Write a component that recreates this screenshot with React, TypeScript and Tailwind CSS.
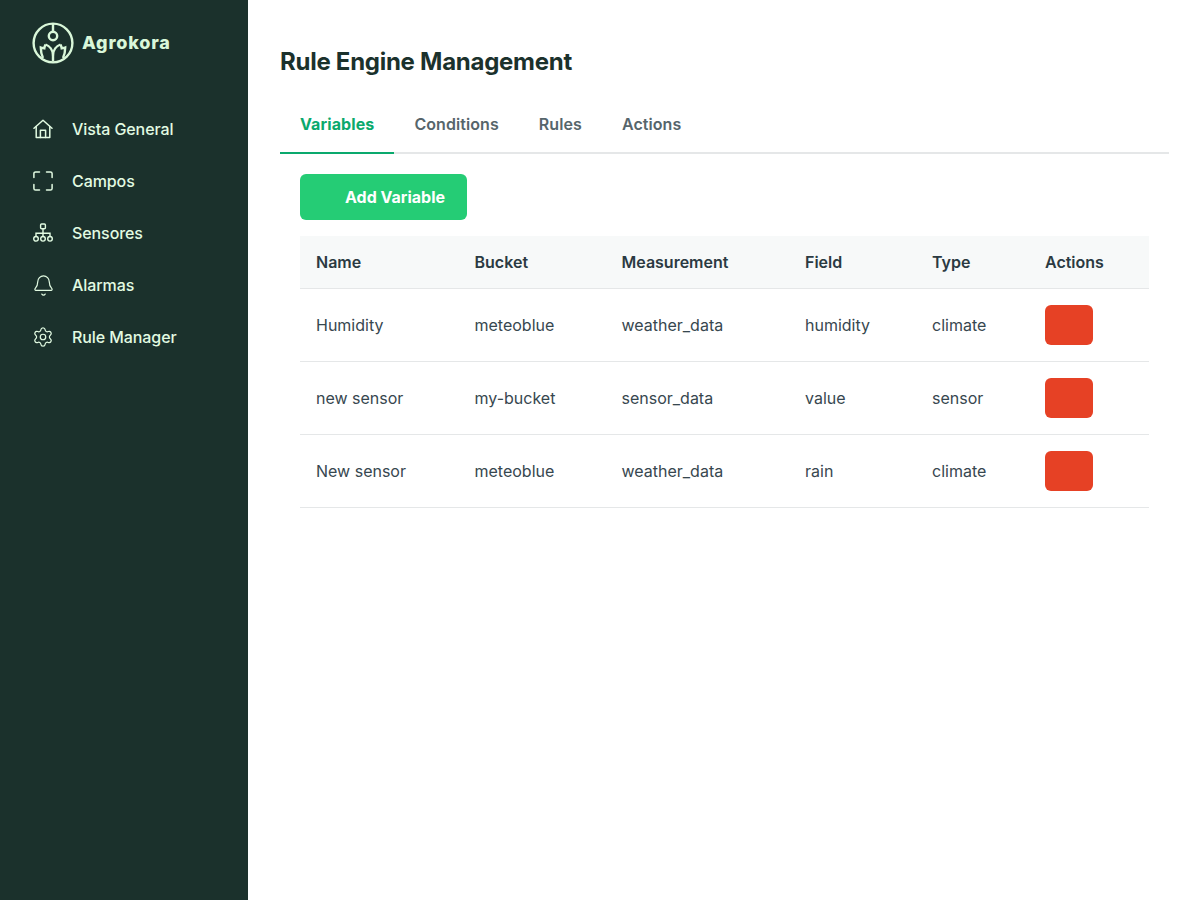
import { Bell, Settings } from "lucide-react";

const navItems = [
  { label: "Vista General", icon: HomeIcon },
  { label: "Campos", icon: FrameIcon },
  { label: "Sensores", icon: TreeIcon },
  { label: "Alarmas", icon: BellIcon },
  { label: "Rule Manager", icon: GearIcon },
];

const tabs = ["Variables", "Conditions", "Rules", "Actions"];

const variables = [
  { name: "Humidity", bucket: "meteoblue", measurement: "weather_data", field: "humidity", type: "climate" },
  { name: "new sensor", bucket: "my-bucket", measurement: "sensor_data", field: "value", type: "sensor" },
  { name: "New sensor", bucket: "meteoblue", measurement: "weather_data", field: "rain", type: "climate" },
];

function HomeIcon() {
  return (
    <svg width="20" height="20" viewBox="0 0 20 20" fill="none" stroke="currentColor" strokeWidth="1.5" strokeLinejoin="round" strokeLinecap="round">
      <path d="M1 9.2 10 1.2l9 8" />
      <path d="M3.2 7.6v11h13.6v-11" />
      <path d="M7.4 18.6v-7.4h5.2v7.4" />
    </svg>
  );
}

function FrameIcon() {
  return (
    <svg width="20" height="20" viewBox="0 0 20 20" fill="none" stroke="currentColor" strokeWidth="1.5" strokeLinecap="round">
      <path d="M6.5 .9H2.6A1.7 1.7 0 0 0 .9 2.6v3.9" />
      <path d="M13.5 .9h3.9a1.7 1.7 0 0 1 1.7 1.7v3.9" />
      <path d="M.9 13.5v3.9a1.7 1.7 0 0 0 1.7 1.7h3.9" />
      <path d="M19.1 13.5v3.9a1.7 1.7 0 0 1-1.7 1.7h-3.9" />
    </svg>
  );
}

function TreeIcon() {
  return (
    <svg width="20" height="20" viewBox="0 0 20 20" fill="none" stroke="currentColor" strokeWidth="1.4">
      <rect x="7.6" y="1" width="4.8" height="4.8" rx="1" />
      <path d="M10 5.8v7.4M3 13.2v-3h14v3" />
      <circle cx="3" cy="15.8" r="2.3" />
      <circle cx="10" cy="15.8" r="2.3" />
      <circle cx="17" cy="15.8" r="2.3" />
    </svg>
  );
}

function BellIcon() {
  return <Bell size={23} strokeWidth={1.25} className="shrink-0" />;
}

function GearIcon() {
  return <Settings size={22} strokeWidth={1.35} className="shrink-0" />;
}

function Logo() {
  return (
    <svg width="42" height="42" viewBox="0 0 42 42" fill="none" stroke="#d9f7d9" strokeWidth="2.4">
      <circle cx="21" cy="21" r="19.4" />
      <path d="M21 1.5v8" />
      <circle cx="21" cy="14" r="4.2" />
      <path d="M13.5 22.5C17.5 24 21 28 21 33.5v6" />
      <path d="M28.5 22.5C24.5 24 21 28 21 33.5" />
      <path d="M13.5 22.5C12.8 24 12.5 25 12.3 26.3 10.5 26 9.5 25.8 8.8 25.5 8.8 30 9.5 33 11 36" />
      <path d="M28.5 22.5C29.2 24 29.5 25 29.7 26.3 31.5 26 32.5 25.8 33.2 25.5 33.2 30 32.5 33 31 36" />
    </svg>
  );
}

export default function App() {
  return (
    <div className="flex min-h-[900px] w-full bg-white font-['Inter',sans-serif]">
      <aside className="w-[248px] shrink-0 bg-[#1b312c] text-[#e2fbe2]">
        <div className="flex h-[106px] items-start gap-[8px] pl-[32px] pt-[22px]">
          <Logo />
          <span className="mt-[9px] text-[18px] font-extrabold leading-[24px] tracking-[0.8px] text-[#d9f7d9]">Agrokora</span>
        </div>
        <nav className="flex flex-col gap-[12px] pt-[3px]">
          {navItems.map(({ label, icon: Icon }) => (
            <div key={label} className="flex h-[40px] items-center gap-[19px] pl-[33px] text-[16px] font-medium tracking-[-0.08px]">
              <span className="flex h-[20px] w-[20px] items-center justify-center">
                <Icon />
              </span>
              {label}
            </div>
          ))}
        </nav>
      </aside>

      <main className="min-w-0 flex-1 pl-[32px] pr-[10px] pt-[46px]">
        <h1 className="text-[24px] font-bold leading-[32px] tracking-[-0.27px] text-[#1b312c]">Rule Engine Management</h1>
        <div className="mt-[24px] flex border-b-2 border-[#e5e7e8]">
          {tabs.map((tab, i) => (
            <div
              key={tab}
              className={
                i === 0
                  ? "-mb-[2px] border-b-2 border-[#0aa96d] px-[20px] pb-[16px] pt-[10px] text-[16px] font-bold leading-[24px] tracking-[0.1px] text-[#0aa96d]"
                  : "px-[20px] pb-[16px] pt-[10px] text-[16px] font-semibold leading-[24px] tracking-[0.08px] text-[#56656b]"
              }
            >
              {tab}
            </div>
          ))}
        </div>

        <div className="px-[20px] pt-[20px]">
          <button className="h-[46px] w-[167px] rounded-[6px] bg-[#25cc75] pl-[45px] pr-[21px] text-left text-[16px] font-bold text-white">
            Add Variable
          </button>

          <table className="mt-[16px] w-[849px] table-fixed border-collapse text-left text-[16px] text-[#37474f]">
            <thead>
              <tr className="h-[52px] border-b border-[#e5e7e8] bg-[#f7f9f9]">
                <th className="w-[158.5px] pl-[16px] font-semibold text-[#2b3a42]">Name</th>
                <th className="w-[147px] pl-[16px] font-semibold text-[#2b3a42]">Bucket</th>
                <th className="w-[183.5px] pl-[16px] font-semibold text-[#2b3a42]">Measurement</th>
                <th className="w-[127px] pl-[16px] font-semibold text-[#2b3a42]">Field</th>
                <th className="w-[113px] pl-[16px] font-semibold text-[#2b3a42]">Type</th>
                <th className="pl-[16px] font-semibold text-[#2b3a42]">Actions</th>
              </tr>
            </thead>
            <tbody>
              {variables.map((row) => (
                <tr key={row.name} className="h-[73px] border-b border-[#e5e7e8]">
                  <td className="pl-[16px]">{row.name}</td>
                  <td className="pl-[16px]">{row.bucket}</td>
                  <td className="pl-[16px]">{row.measurement}</td>
                  <td className="pl-[16px]">{row.field}</td>
                  <td className="pl-[16px]">{row.type}</td>
                  <td className="pl-[16px]">
                    <button className="block h-[40px] w-[48px] rounded-[6px] bg-[#e64125]" aria-label="Delete" />
                  </td>
                </tr>
              ))}
            </tbody>
          </table>
        </div>
      </main>
    </div>
  );
}
